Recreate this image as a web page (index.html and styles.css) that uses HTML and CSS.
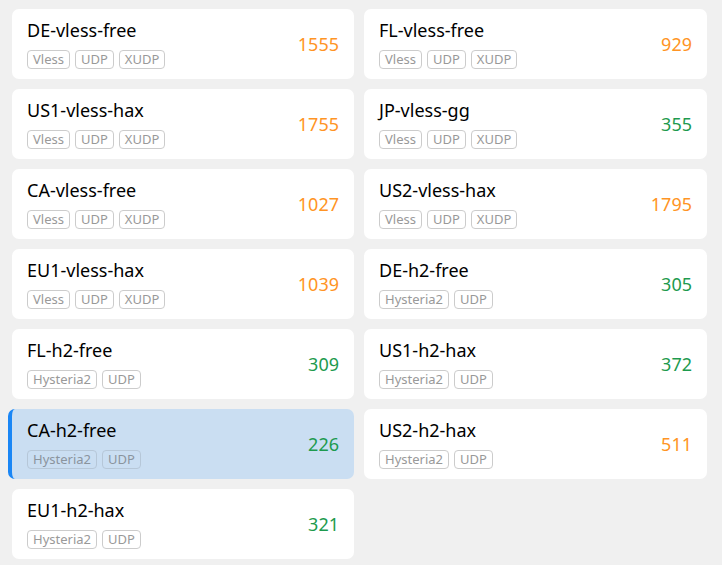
FILE: index.html
```html
<!DOCTYPE html>
<html lang="en">
<head>
  <meta charset="UTF-8" />
  <meta name="viewport" content="width=device-width, initial-scale=1.0"/>
  <title>Nodes</title>
  <link rel="stylesheet" href="styles.css">
</head>
<body>
  <div class="node-grid">

    <div class="node">
      <div class="info">
        <div class="name">DE-vless-free</div>
        <div class="tags"><span>Vless</span><span>UDP</span><span>XUDP</span></div>
      </div>
      <div class="delay slow">1555</div>
    </div>
    <div class="node">
      <div class="info">
        <div class="name">FL-vless-free</div>
        <div class="tags"><span>Vless</span><span>UDP</span><span>XUDP</span></div>
      </div>
      <div class="delay slow">929</div>
    </div>

    <div class="node">
      <div class="info">
        <div class="name">US1-vless-hax</div>
        <div class="tags"><span>Vless</span><span>UDP</span><span>XUDP</span></div>
      </div>
      <div class="delay slow">1755</div>
    </div>
    <div class="node">
      <div class="info">
        <div class="name">JP-vless-gg</div>
        <div class="tags"><span>Vless</span><span>UDP</span><span>XUDP</span></div>
      </div>
      <div class="delay fast">355</div>
    </div>

    <div class="node">
      <div class="info">
        <div class="name">CA-vless-free</div>
        <div class="tags"><span>Vless</span><span>UDP</span><span>XUDP</span></div>
      </div>
      <div class="delay slow">1027</div>
    </div>
    <div class="node">
      <div class="info">
        <div class="name">US2-vless-hax</div>
        <div class="tags"><span>Vless</span><span>UDP</span><span>XUDP</span></div>
      </div>
      <div class="delay slow">1795</div>
    </div>

    <div class="node">
      <div class="info">
        <div class="name">EU1-vless-hax</div>
        <div class="tags"><span>Vless</span><span>UDP</span><span>XUDP</span></div>
      </div>
      <div class="delay slow">1039</div>
    </div>
    <div class="node">
      <div class="info">
        <div class="name">DE-h2-free</div>
        <div class="tags"><span>Hysteria2</span><span>UDP</span></div>
      </div>
      <div class="delay fast">305</div>
    </div>

    <div class="node">
      <div class="info">
        <div class="name">FL-h2-free</div>
        <div class="tags"><span>Hysteria2</span><span>UDP</span></div>
      </div>
      <div class="delay fast">309</div>
    </div>
    <div class="node">
      <div class="info">
        <div class="name">US1-h2-hax</div>
        <div class="tags"><span>Hysteria2</span><span>UDP</span></div>
      </div>
      <div class="delay fast">372</div>
    </div>

    <div class="node selected">
      <div class="info">
        <div class="name">CA-h2-free</div>
        <div class="tags"><span>Hysteria2</span><span>UDP</span></div>
      </div>
      <div class="delay fast">226</div>
    </div>
    <div class="node">
      <div class="info">
        <div class="name">US2-h2-hax</div>
        <div class="tags"><span>Hysteria2</span><span>UDP</span></div>
      </div>
      <div class="delay slow">511</div>
    </div>

    <div class="node">
      <div class="info">
        <div class="name">EU1-h2-hax</div>
        <div class="tags"><span>Hysteria2</span><span>UDP</span></div>
      </div>
      <div class="delay fast">321</div>
    </div>

  </div>
</body>
</html>
```

FILE: styles.css
```css
body {
  font-family: "Noto Sans", "Open Sans", sans-serif;
  margin: 0;
  padding: 0;
  background: #f0f0f0;
}

.node-grid {
  display: grid;
  grid-template-columns: 342px 343px;
  gap: 10px;
  padding: 9px 15px 0 12px;
}

.node {
  display: flex;
  justify-content: space-between;
  align-items: center;
  height: 70px;
  box-sizing: border-box;
  padding: 10px 15px 10px 15px;
  background: #fff;
  border-radius: 7px;
}

.node.selected {
  margin-left: -4px;
  border-left: 4px solid #1a86f5;
  background: #cadef2;
}

.name {
  font-size: 18px;
  line-height: 22px;
  color: #000;
  font-weight: 400;
}

.tags {
  display: flex;
  gap: 5px;
  margin-top: 9px;
}

.tags span {
  font-size: 13px;
  line-height: 17px;
  padding: 0 5px;
  color: #999;
  border: 1px solid #ccc;
  border-radius: 4px;
}

.selected .tags span {
  color: #8a949e;
  border-color: #b6c7d8;
}

.delay {
  font-size: 18px;
}

.slow { color: #ff9424; }
.fast { color: #1d9a4e; }
```
